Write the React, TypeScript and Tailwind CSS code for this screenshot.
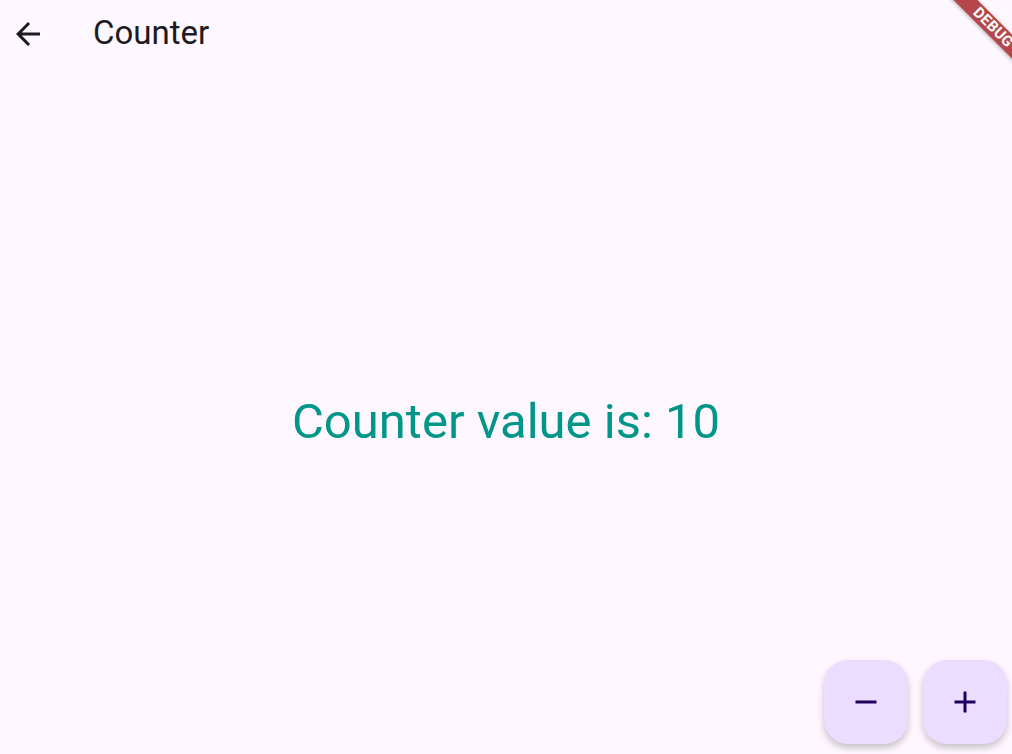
import React, { useState } from 'react';

// Material icon paths (24x24 viewBox)
function MdIcon({ d, className }: { d: string; className?: string }) {
  return (
    <svg viewBox="0 0 24 24" className={className} fill="currentColor">
      <path d={d} />
    </svg>
  );
}

const ARROW_BACK = 'M20 11H7.83l5.59-5.59L12 4l-8 8 8 8 1.41-1.41L7.83 13H20v-2z';
const ADD = 'M19 13h-6v6h-2v-6H5v-2h6V5h2v6h6v2z';
const REMOVE = 'M19 13H5v-2h14v2z';

export default function App() {
  const [count, setCount] = useState(10);

  return (
    <div
      className="relative h-[754px] w-full overflow-hidden bg-[#fef7ff] flex flex-col"
      style={{ fontFamily: 'Roboto, "Noto Sans", sans-serif' }}
    >
      {/* App bar */}
      <div className="h-[68px] flex items-center shrink-0">
        <button className="ml-[10px] w-[36px] h-[36px] text-[#1d1b20]" aria-label="Back">
          <MdIcon d={ARROW_BACK} className="w-[36px] h-[36px]" />
        </button>
        <h1 className="ml-[47px] mb-[3px] text-[33px] leading-none text-[#1d1b20]">Counter</h1>
      </div>

      {/* Body */}
      <div className="flex-1 flex items-center justify-center">
        <p className="text-[49px] leading-none text-[#009688] pt-[20px]">Counter value is: {count}</p>
      </div>

      {/* FABs */}
      <div className="absolute right-[5px] bottom-[10px] flex gap-[15px]">
        <button
          onClick={() => setCount(c => c - 1)}
          className="w-[84px] h-[84px] rounded-[24px] bg-[#eaddff] text-[#21005d] flex items-center justify-center shadow-[0_4px_7px_rgba(0,0,0,0.22)]"
          aria-label="Decrement"
        >
          <MdIcon d={REMOVE} className="w-[36px] h-[36px]" />
        </button>
        <button
          onClick={() => setCount(c => c + 1)}
          className="w-[84px] h-[84px] rounded-[24px] bg-[#eaddff] text-[#21005d] flex items-center justify-center shadow-[0_4px_7px_rgba(0,0,0,0.22)]"
          aria-label="Increment"
        >
          <MdIcon d={ADD} className="w-[36px] h-[36px]" />
        </button>
      </div>

      {/* Debug banner */}
      <div className="absolute top-[19px] right-[-51px] w-[140px] h-[17px] rotate-45 bg-[#b5474b] shadow-[0_1px_4px_rgba(0,0,0,0.3)] flex items-center justify-center pointer-events-none">
        <span className="text-white text-[15px] font-bold leading-none tracking-[0.3px]">DEBUG</span>
      </div>
    </div>
  );
}
